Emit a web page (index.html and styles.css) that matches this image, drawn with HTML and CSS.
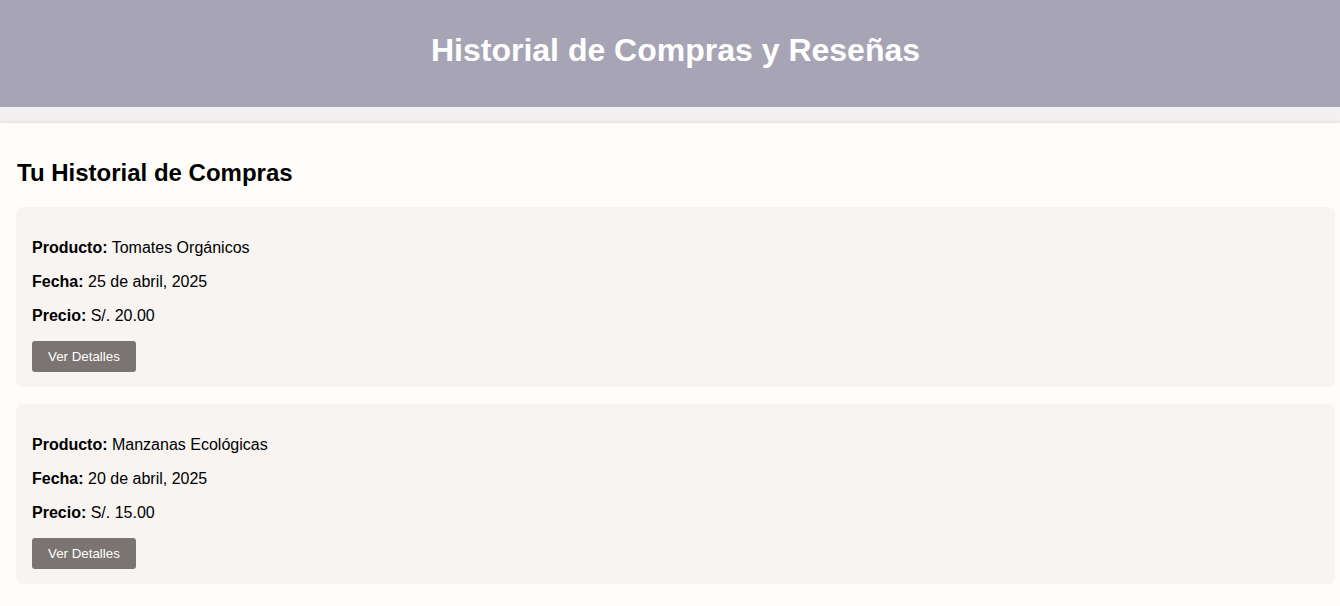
FILE: index.html
```html
<!DOCTYPE html>
<html lang="es">
<head>
<meta charset="utf-8">
<title>Historial de Compras y Reseñas</title>
<link rel="stylesheet" href="styles.css">
</head>
<body>
<header class="site-header">
  <h1 class="site-title">Historial de Compras y Reseñas</h1>
</header>
<main class="content">
  <section class="history">
    <h2 class="history-title">Tu Historial de Compras</h2>
    <div class="purchase">
      <p class="purchase-line"><strong>Producto:</strong> Tomates Orgánicos</p>
      <p class="purchase-line"><strong>Fecha:</strong> 25 de abril, 2025</p>
      <p class="purchase-line"><strong>Precio:</strong> S/. 20.00</p>
      <button class="btn">Ver Detalles</button>
    </div>
    <div class="purchase">
      <p class="purchase-line"><strong>Producto:</strong> Manzanas Ecológicas</p>
      <p class="purchase-line"><strong>Fecha:</strong> 20 de abril, 2025</p>
      <p class="purchase-line"><strong>Precio:</strong> S/. 15.00</p>
      <button class="btn">Ver Detalles</button>
    </div>
  </section>
</main>
</body>
</html>
```
FILE: styles.css
```css
html, body {
  margin: 0;
  padding: 0;
}
body {
  background: #f3f0f1;
  font-family: "Liberation Sans", Arial, sans-serif;
  color: #000;
}
.site-header {
  background: #a7a5b5;
  height: 107px;
  box-sizing: border-box;
  padding: 32px 0 0 11px;
  text-align: center;
}
.site-title {
  margin: 0;
  color: #fff;
  font-size: 32px;
  line-height: 37px;
  font-weight: bold;
}
.content {
  padding-top: 15.5px;
}
.history {
  background: #fefdfa;
  padding: 16px 5px 17px 16px;
  box-shadow: 0 -1px 3px rgba(0, 0, 0, 0.08);
  min-height: 500px;
}
.history-title {
  margin: 20px 0 20px 1px;
  font-size: 24px;
  line-height: 28px;
  font-weight: bold;
}
.purchase {
  background: #f7f4f2;
  border-radius: 6px;
  padding: 16px 16px 15.5px;
  margin-bottom: 16.5px;
}
.purchase-line {
  margin: 16px 0;
  font-size: 16px;
  line-height: 18px;
}
.btn {
  display: block;
  margin-top: 0;
  background: #7a7572;
  color: #fff;
  border: none;
  border-radius: 3px;
  font-family: "Liberation Sans", Arial, sans-serif;
  font-size: 13.33px;
  height: 31px;
  padding: 0 16px;
  cursor: pointer;
}
```
